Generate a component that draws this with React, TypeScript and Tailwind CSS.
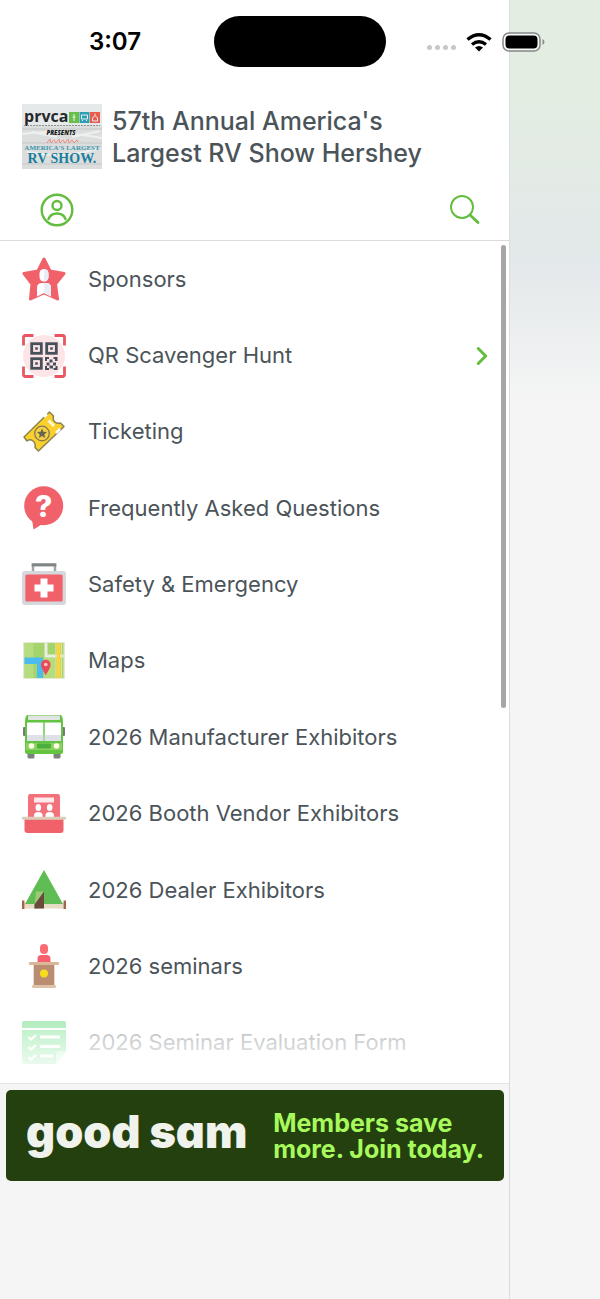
import type { ReactNode } from 'react'
import { ChevronRight } from 'lucide-react'

const SponsorIcon = () => (
  <svg viewBox="0 0 44 44" className="size-11 shrink-0" aria-hidden="true">
    <path
      d="M22 2 28 14 42 16.500 33.500 27 35.500 42 22 36 8.500 42 10 27 2 16.500 16 14Z"
      fill="#f0616a"
      stroke="#f0616a"
      strokeWidth="3"
      strokeLinejoin="round"
    />
    <rect x="17.500" y="12" width="9" height="12.500" rx="4.500" fill="#fff" />
    <path d="M15 39.500V31q0-5 5-5h4q5 0 5 5v8.500L22 36Z" fill="#fff" />
    <path d="M22 12a4.500 4.500 0 0 1 4.500 4.500v3.500a4.500 4.500 0 0 1-4.500 4.500ZM22 26h2q5 0 5 5v8.500L22 36Z" fill="#e9edf5" />
  </svg>
)

const QrIcon = () => (
  <svg viewBox="0 0 44 44" className="size-11 shrink-0" aria-hidden="true">
    <circle cx="22" cy="22" r="21" fill="#fde4e7" />
    <path
      d="M1.500 11.500v-8q0-2 2-2h8M32.500 1.500h8q2 0 2 2v8M42.500 32.500v8q0 2-2 2h-8M11.500 42.500h-8q-2 0-2-2v-8"
      fill="none"
      stroke="#ea5560"
      strokeWidth="2.800"
    />
    <g fill="none" stroke="#46505a" strokeWidth="2.800">
      <rect x="9.700" y="9.700" width="9.600" height="9.600" />
      <rect x="24.700" y="9.700" width="9.600" height="9.600" />
      <rect x="9.700" y="24.700" width="9.600" height="9.600" />
    </g>
    <g fill="#46505a">
      <path d="M13.200 13.200h2.600v2.600h-2.600ZM28.200 13.200h2.600v2.600h-2.600ZM13.200 28.200h2.600v2.600h-2.600Z" />
      <path d="M23 23h4v2h-2v2h-2ZM31.500 23h4v4h-2.500v-2h-1.500ZM27.500 25.500h3v3h-3ZM24.500 28.500h3v3h-3ZM31 28.500h3v3h-3ZM27.500 31.500h3.500v3h-3.500ZM23 32h2v2h2v2h-4ZM33.500 32h2v4h-4v-2h2Z" />
    </g>
  </svg>
)

const TicketIcon = () => (
  <svg viewBox="0 0 44 44" className="size-11 shrink-0" aria-hidden="true">
    <path
      d="M27.500 2 31.500 6q-1 4 1.500 6t5.500 1L42 16.500 16.500 41 13 37.500q1-4-2-6.500t-6 0L2 27Z"
      fill="#fad02c"
      stroke="#8b8350"
      strokeWidth="1.500"
      strokeLinejoin="round"
    />
    <path d="m22 7 3-3M34 23l4-4" stroke="#fff" strokeWidth="2.500" />
    <path d="m26.500 10.500 5.500 5.500" stroke="#fff7d8" strokeWidth="3" />
    <circle cx="20" cy="23.500" r="7.300" fill="#f5cf46" stroke="#80794f" strokeWidth="1.300" />
    <path
      d="m20 18.500 1.400 3.300 3.600.3-2.700 2.400.8 3.500-3.100-1.900-3.100 1.900.8-3.500-2.700-2.400 3.600-.3Z"
      fill="#66654f"
    />
  </svg>
)

const QuestionIcon = () => (
  <svg viewBox="0 0 44 44" className="size-11 shrink-0" aria-hidden="true">
    <circle cx="21.700" cy="19.700" r="19.500" fill="#f0616a" />
    <path d="M10 33 11.500 43.500 22 37Z" fill="#f0616a" />
    <text x="21.700" y="30.500" textAnchor="middle" fill="#fff" className="text-[30px] font-extrabold">
      ?
    </text>
  </svg>
)

const FirstAidIcon = () => (
  <svg viewBox="0 0 44 44" className="size-11 shrink-0" aria-hidden="true">
    <path d="M11 9V2h22v7" fill="none" stroke="#a0a5a6" strokeWidth="2.500" />
    <path d="M9.700 1.800h24.600" stroke="#7f8486" strokeWidth="3" />
    <rect y="8" width="44" height="34" rx="3" fill="#d5d8dc" />
    <rect x="3.300" y="11.500" width="37.400" height="27" rx="1.500" fill="#f0616a" />
    <path d="M18.500 15.500h7v6h6v7h-6v6h-7v-6h-6v-7h6Z" fill="#fff" />
  </svg>
)

const MapIcon = () => (
  <svg viewBox="0 0 44 44" className="size-11 shrink-0" aria-hidden="true">
    <rect x="1" y="3" width="42" height="37" fill="#e3e9d3" />
    <rect x="2.500" y="4" width="39" height="35" fill="#a5d46c" />
    <path d="M2.500 4h9v35h-9ZM22 19h11v20H22Z" fill="#b5dd7d" />
    <path d="M2.500 18.500H21V39h-6V25H2.500Z" fill="#4cbcf0" />
    <path d="M24 4v13h17.500" fill="none" stroke="#e9eee2" strokeWidth="3" />
    <path d="M36.500 4v35" stroke="#fbd33c" strokeWidth="4" />
    <path d="M33.800 4v35M39.500 4v35" stroke="#dfe4a0" />
    <path d="M23.800 36.500C21 31 19 28.500 19 25.500a4.800 4.800 0 0 1 9.600 0c0 3-2 5.500-4.800 11Z" fill="#ea4b58" />
    <circle cx="23.800" cy="25.500" r="1.800" fill="#f8c9c9" />
  </svg>
)

const BusIcon = () => (
  <svg viewBox="0 0 44 44" className="size-11 shrink-0" aria-hidden="true">
    <path d="M5.500 38h7v4q0 1.500-1.500 1.500H7q-1.500 0-1.500-1.500ZM31.500 38h7v4q0 1.500-1.500 1.500h-4q-1.500 0-1.500-1.500Z" fill="#7d7f80" />
    <rect x="1" y="12" width="3" height="9" rx="1" fill="#77797c" />
    <rect x="40" y="12" width="3" height="9" rx="1" fill="#77797c" />
    <path d="M5 0h34q2 2 2 7v30q0 2-2 2H5q-2 0-2-2V7q0-5 2-7Z" fill="#62c441" />
    <path d="M4 28h36v7H4Z" fill="#8dd25f" />
    <rect x="6" y=".5" width="32" height="4.500" rx="1" fill="#e1e5e4" />
    <rect x="5" y="7.500" width="16.300" height="18.500" fill="#fff" />
    <rect x="22.700" y="7.500" width="16.300" height="18.500" fill="#fff" />
    <path d="M5 20h16.300v6H5ZM22.700 20H39v6H22.700Z" fill="#e0e0e8" />
    <rect x="15" y="28.500" width="14" height="5" rx="1" fill="#4baf3d" />
    <circle cx="9.500" cy="31" r="2.800" fill="#fffceb" />
    <circle cx="34.500" cy="31" r="2.800" fill="#fffceb" />
  </svg>
)

const BoothIcon = () => (
  <svg viewBox="0 0 44 44" className="size-11 shrink-0" aria-hidden="true">
    <path d="M8 2h28q2 0 2 3v21H6V5q0-3 2-3Z" fill="#f4707a" />
    <rect x="12" y="5.500" width="20" height="5" fill="#fdeaec" />
    <g fill="#fff">
      <ellipse cx="16.300" cy="15.500" rx="2.800" ry="3.500" />
      <ellipse cx="27.700" cy="15.500" rx="2.800" ry="3.500" />
      <path d="M12 25.500v-2q0-3.500 4.300-3.500t4.300 3.500v2ZM23.400 25.500v-2q0-3.500 4.300-3.500t4.300 3.500v2Z" />
    </g>
    <path d="M2.500 27h39v11q0 3-3 3h-33q-3 0-3-3Z" fill="#f0616a" />
    <rect y="24.800" width="44" height="3" rx="1" fill="#dccdb9" />
  </svg>
)

const TentIcon = () => (
  <svg viewBox="0 0 44 44" className="size-11 shrink-0" aria-hidden="true">
    <rect x="1" y="35" width="42" height="5.500" fill="#e8dcc4" />
    <path d="M22 2 41 36H3Z" fill="#5fbd54" />
    <path d="M14 23.500h8v9l-6 8h-4Z" fill="#9bcb73" />
    <path d="M22 23.500v17h-9.500v-4Z" fill="#6b4a3f" />
    <path d="M1.200 32.500V41M42.800 32.500V41" stroke="#a2644c" strokeWidth="2.400" />
  </svg>
)

const PodiumIcon = () => (
  <svg viewBox="0 0 44 44" className="size-11 shrink-0" aria-hidden="true">
    <rect x="18" width="8" height="10" rx="4" fill="#fb6b71" />
    <path d="M15.500 19v-4q0-4 4-4h5q4 0 4 4v4Z" fill="#f7606f" />
    <rect x="11.700" y="20" width="20.600" height="22" fill="#bb8d70" />
    <rect x="7" y="18" width="30" height="3" rx="1" fill="#d9b798" />
    <rect x="10" y="41" width="24" height="3" rx="1" fill="#dfc3a8" />
    <circle cx="22" cy="29.500" r="4" fill="#f9dc1c" />
  </svg>
)

const FormIcon = () => (
  <svg viewBox="0 0 44 44" className="size-11 shrink-0" aria-hidden="true">
    <path d="M2 0h40q2 0 2 2v5H0V2q0-2 2-2Z" fill="#3ecf5c" />
    <path d="M0 9h44v21L34 43H3q-3 0-3-3Z" fill="#52d96e" />
    <path d="M44 30 34 43V33q0-3 3-3Z" fill="#a5efb3" />
    <g fill="none" stroke="#fff" strokeWidth="2.800">
      <path d="m6.500 16 2.500 2.500 5-4.500M6.500 26 9 28.500l5-4.500M6.500 36 9 38.500l5-4.500" strokeWidth="2.200" />
      <path d="M18 16h20M18 25.500h20M18 35h13" />
    </g>
  </svg>
)

const menuItems: { label: string; icon: ReactNode; hasChildren?: boolean }[] = [
  { label: 'Sponsors', icon: <SponsorIcon /> },
  { label: 'QR Scavenger Hunt', icon: <QrIcon />, hasChildren: true },
  { label: 'Ticketing', icon: <TicketIcon /> },
  { label: 'Frequently Asked Questions', icon: <QuestionIcon /> },
  { label: 'Safety & Emergency', icon: <FirstAidIcon /> },
  { label: 'Maps', icon: <MapIcon /> },
  { label: '2026 Manufacturer Exhibitors', icon: <BusIcon /> },
  { label: '2026 Booth Vendor Exhibitors', icon: <BoothIcon /> },
  { label: '2026 Dealer Exhibitors', icon: <TentIcon /> },
  { label: '2026 seminars', icon: <PodiumIcon /> },
  { label: '2026 Seminar Evaluation Form', icon: <FormIcon /> },
]

function EventLogo() {
  return (
    <svg viewBox="0 0 80 65" className="h-[65px] w-20 shrink-0" role="img" aria-label="PRVCA presents America's Largest RV Show">
      <rect width="80" height="65" fill="#dcdedd" />
      <path d="M0 25h80M0 39h80M0 60h80" stroke="#c4c8c7" />
      <path d="M0 30q30-5 80 4M5 48q35 7 70-3M10 28l25 5M50 33l28-6" stroke="#eef0ef" strokeWidth="2" fill="none" />
      <rect width="80" height="21" fill="#e6e9ea" />
      <text x="2" y="18" fill="#26292c" className="font-['Open_Sans',sans-serif] text-[16px] font-bold">
        prvca
      </text>
      <rect x="47" y="8" width="10" height="11" fill="#6abf4b" />
      <rect x="57.500" y="8" width="10" height="11" fill="#2f9db5" />
      <rect x="68" y="8" width="10" height="11" fill="#ea5b4d" />
      <path d="M52 10v7M50.500 13h3M59.500 11h6v4h-6ZM60 16.500h1M64 16.500h1M70.500 17v-3l2.500-2.500 2.500 2.500v3ZM73 9.500v2" stroke="#e9f1ee" fill="none" />
      <path d="M2 21.500h76" stroke="#8e9496" strokeDasharray="2 1" />
      <text x="39" y="31" textAnchor="middle" fill="#17191a" className="font-['Open_Sans',sans-serif] text-[6px] font-extrabold italic">
        PRESENTS
      </text>
      <path d="m25 39 3-4 1 4 3-3 2 3 3-4 1 4 3-3 2 3 3-4 1 4 3-3 2 3 3-3 1 2" stroke="#ef8a82" fill="none" />
      <text x="40" y="46" textAnchor="middle" fill="#3c94ad" className="font-['Liberation_Serif',serif] text-[7px] font-bold">
        AMERICA'S LARGEST
      </text>
      <text x="40" y="59" textAnchor="middle" fill="#197f9d" className="font-['Liberation_Serif',serif] text-[14px] font-bold">
        RV SHOW.
      </text>
    </svg>
  )
}

function StatusBar() {
  return (
    <div className="absolute inset-x-0 top-0 grid grid-cols-[1fr_auto_1fr] items-center pt-4">
      <div className="pl-4 text-center text-2xl font-semibold text-black">3:07</div>
      <div className="h-[51px] w-43 rounded-full bg-black" />
      <div className="flex items-center justify-end gap-2.5 pr-[55px]">
        <div className="flex gap-[3px] pt-3">
          <span className="size-[5px] rounded-full bg-[#c8c8c8]" />
          <span className="size-[5px] rounded-full bg-[#c8c8c8]" />
          <span className="size-[5px] rounded-full bg-[#c8c8c8]" />
          <span className="size-[5px] rounded-full bg-[#c8c8c8]" />
        </div>
        <svg viewBox="0 0 26 20" className="h-5 w-[26px]" aria-label="Wi-Fi" role="img">
          <g fill="none" stroke="#000" strokeWidth="3.400">
            <path d="M1.500 7.500q11.500-9.500 23 0" />
            <path d="M6 12.500q7-5.500 14 0" />
          </g>
          <path d="m13 19.500-4-4q4-3 8 0Z" />
        </svg>
        <svg viewBox="0 0 43 20" className="h-5 w-[43px]" aria-label="Battery" role="img">
          <rect x="1" y="1" width="37" height="18" rx="6" fill="#fff" fillOpacity=".7" stroke="#858785" strokeWidth="1.500" />
          <rect x="3.500" y="3.500" width="32" height="13" rx="4" />
          <path d="M40.500 7q2 1 2 3t-2 3Z" fill="#8a8c8a" />
        </svg>
      </div>
    </div>
  )
}

export default function App() {
  return (
    <div className="relative flex min-h-screen bg-[#f5f5f5] font-[Inter,'Liberation_Sans',sans-serif] text-[#4b5459]">
      <div className="flex w-[85%] flex-col border-r border-[#dcdedd] bg-white">
        <header className="border-b border-[#dcdcdc] pt-[104px]">
          <div className="flex items-center gap-2.5 pl-[22px]">
            <EventLogo />
            <h1 className="text-[25px] leading-8 font-medium">
              57th Annual America's
              <br />
              Largest RV Show Hershey
            </h1>
          </div>
          <div className="flex items-center justify-between pt-6 pr-7 pb-[13px] pl-10">
            <button type="button" aria-label="Profile">
              <svg viewBox="0 0 34 34" className="size-[34px]" fill="none" stroke="#62bd3e" strokeWidth="2.400">
                <circle cx="17" cy="17" r="15.300" />
                <circle cx="17" cy="12.500" r="4.500" />
                <path d="M8.500 26q2-5.500 8.500-5.500t8.500 5.500" strokeLinecap="round" />
              </svg>
            </button>
            <button type="button" aria-label="Search">
              <svg viewBox="0 0 32 32" className="size-8" fill="none" stroke="#62bd3e" strokeLinecap="round">
                <circle cx="13" cy="13" r="11" strokeWidth="1.900" />
                <path d="m21 21 8 7.500" strokeWidth="2.800" />
              </svg>
            </button>
          </div>
        </header>

        <nav className="relative flex flex-1 flex-col pb-0.5">
          <ul className="flex flex-1 flex-col">
            {menuItems.map((item) => (
              <li key={item.label} className="flex flex-1">
                <a href="#" className="flex flex-1 items-center gap-[22px] pr-3 pl-[22px] text-[22px]">
                  {item.icon}
                  <span className="flex-1">{item.label}</span>
                  {item.hasChildren && <ChevronRight className="size-[30px] text-[#62bd3e]" strokeWidth={2.4} />}
                </a>
              </li>
            ))}
          </ul>
          <div className="pointer-events-none absolute inset-x-0 bottom-0 h-24 bg-linear-to-b from-white/0 via-white/60 via-35% to-white to-100%" />
          <div className="absolute top-1 right-[3px] h-[55%] w-[5px] rounded-full bg-[#a6a6a6]" />
        </nav>

        <footer className="h-[216px] border-t border-[#e4e4e4] bg-[#f5f5f5] pt-1.5 pr-[5px] pl-1.5 shadow-[0_-2px_4px_rgba(0,0,0,0.04)]">
          <a href="#" className="flex h-[91px] items-center justify-between rounded-[5px] bg-[#24400e] px-5">
            <span className="pb-2 text-[45px] leading-none font-black text-[#f0f2ec] [font-feature-settings:'cv11']">
              good sam
            </span>
            <span className="text-[25px] leading-[26px] font-bold whitespace-nowrap text-[#a8fa5c]">
              Members save
              <br />
              more. Join today.
            </span>
          </a>
        </footer>
      </div>

      {/* blurred page behind the drawer */}
      <div className="flex-1 bg-linear-to-b from-[#e3ede2] from-8% via-[#e3e8ea] via-20% to-[#f5f5f5] to-31%" />

      <StatusBar />
    </div>
  )
}
